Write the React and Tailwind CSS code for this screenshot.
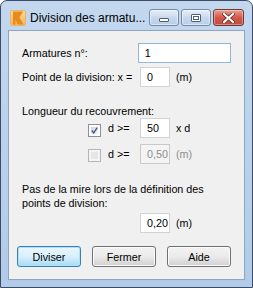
import { useState } from 'react';

const AppIcon = () => (
  <svg width="16" height="16" viewBox="0 0 16 16">
    <defs>
      <linearGradient id="ic" x1="0" y1="0" x2="0" y2="1">
        <stop offset="0" stopColor="#fbd89a" />
        <stop offset="1" stopColor="#f3b65a" />
      </linearGradient>
    </defs>
    <rect x="0.5" y="0.5" width="15" height="15" rx="1.5" fill="url(#ic)" stroke="#e9b46a" />
    <path d="M3 1.5 L13 1.5 L9.5 7.5 L13.5 14.5 L8 14.5 L5.5 10 L5.5 14.5 L3 14.5 Z" fill="#e98a1d" />
  </svg>
);

const CaptionButton = ({ kind }) => {
  if (kind === 'close') {
    return (
      <div className="w-[31px] h-[17px] rounded-[3px] border border-[#6b3a37] bg-gradient-to-b from-[#e8a093] via-[#d3574a] to-[#c24a3c] flex items-center justify-center shadow-[inset_0_0_0_1px_rgba(255,255,255,0.35)]">
        <svg width="13" height="10" viewBox="0 0 13 10">
          <path d="M2 1 L11 9 M11 1 L2 9" stroke="#5a2a26" strokeWidth="3.6" strokeLinecap="square" />
          <path d="M2 1 L11 9 M11 1 L2 9" stroke="#ffffff" strokeWidth="2.2" strokeLinecap="square" />
        </svg>
      </div>
    );
  }
  return (
    <div className="w-[30px] h-[17px] rounded-[3px] border border-[#7189ab] bg-gradient-to-b from-[#e7eff8] via-[#c9d9ec] to-[#b8cde6] flex items-center justify-center shadow-[inset_0_0_0_1px_rgba(255,255,255,0.5)]">
      {kind === 'min' ? (
        <div className="w-[10px] h-[4px] mt-[4px] bg-white border border-[#4e5f79] rounded-[1px]" />
      ) : (
        <div className="w-[10px] h-[8px] border border-[#4e5f79] bg-white flex items-center justify-center rounded-[1px]">
          <div className="w-[6px] h-[4px] border border-[#4e5f79]" />
        </div>
      )}
    </div>
  );
};

const TextBox = ({ value, width = 'w-[30px]', disabled, focused }) => (
  <div
    className={`${width} h-[20px] border flex items-center px-[6px] ${
      disabled
        ? 'bg-[#f4f4f4] border-[#c9c9c9] text-[#8d8d8d]'
        : focused
        ? 'bg-white border-[#8fb6dd] text-black'
        : 'bg-white border-[#d0d3d8] text-black'
    }`}
  >
    {value}
  </div>
);

const CheckBox = ({ checked, disabled }) => (
  <div
    className={`w-[13px] h-[13px] border p-[2px] ${
      disabled ? 'border-[#b5b5b5] bg-[#f4f4f4]' : 'border-[#8f8f8f] bg-white'
    }`}
  >
    <div
      className={`w-full h-full flex items-center justify-center ${
        disabled ? 'bg-[#e6e6e6]' : 'bg-gradient-to-br from-[#cfd2d6] to-[#f4f4f4]'
      }`}
    >
      {checked && (
        <svg width="9" height="9" viewBox="0 0 9 9">
          <path d="M1 4.5 L3.5 7.5 L8 0.8" fill="none" stroke="#3f5689" strokeWidth="1.8" />
        </svg>
      )}
    </div>
  </div>
);

const DialogButton = ({ label, primary }) => (
  <div
    className={`w-[65px] h-[21px] rounded-[3px] border flex items-center justify-center text-black ${
      primary
        ? 'border-[#3c7fb1] bg-gradient-to-b from-[#eaf6fd] via-[#d9f0fc] to-[#a7d9f5] shadow-[inset_0_0_0_1px_#a9e3fb]'
        : 'border-[#707070] bg-gradient-to-b from-[#f2f2f2] via-[#ebebeb] to-[#d0d0d0] shadow-[inset_0_0_0_1px_#fcfcfc]'
    }`}
  >
    {label}
  </div>
);

export default function App() {
  const [values] = useState({ bar: '1', x: '0', k: '50', len: '0,50', step: '0,20' });

  return (
    <div className="w-[253px] h-[288px] bg-white">
      <div className="w-[253px] h-[288px] flex flex-col rounded-t-[7px] border border-[#3b4d66] bg-gradient-to-b from-[#c3d8ef] to-[#b1cbe8] font-['Liberation_Sans',Arial,sans-serif]">
        {/* Title bar */}
        <div className="h-[29px] flex items-start pt-[8px] pl-[9px] pr-[8px] shrink-0">
          <div className="mt-[1px]">
            <AppIcon />
          </div>
          <span className="ml-[4px] mt-[1px] text-[12px] leading-[16px] text-black whitespace-nowrap">
            Division des armatu...
          </span>
          <div className="ml-auto flex gap-[2px]">
            <CaptionButton kind="min" />
            <CaptionButton kind="max" />
            <CaptionButton kind="close" />
          </div>
        </div>

        {/* Client area */}
        <div className="mx-[7px] h-[250px] bg-[#f0f0f0] border border-[#8ea5c2] px-[13px] text-[10.75px] leading-[14px] text-black">
          <div className="mt-[12px] flex items-center h-[20px]">
            <div className="w-[118px]">Armatures n°:</div>
            <TextBox value={values.bar} width="w-[95px]" focused />
          </div>

          <div className="mt-[4px] flex items-center h-[20px]">
            <div className="w-[118px] whitespace-nowrap">Point de la division: x =</div>
            <TextBox value={values.x} />
            <span className="ml-[6px]">(m)</span>
          </div>

          <div className="mt-[17px]">Longueur du recouvrement:</div>

          <div className="mt-[0px] flex items-center h-[20px] pl-[66px]">
            <div className="mt-[4px]">
              <CheckBox checked />
            </div>
            <span className="ml-[7px] w-[32px]">d &gt;=</span>
            <TextBox value={values.k} />
            <span className="ml-[6px]">x d</span>
          </div>

          <div className="mt-[6px] flex items-center h-[20px] pl-[66px]">
            <div className="mt-[3px]">
              <CheckBox disabled />
            </div>
            <span className="ml-[7px] w-[32px]">d &gt;=</span>
            <TextBox value={values.len} disabled />
            <span className="ml-[6px] text-[#8d8d8d]">(m)</span>
          </div>

          <div className="mt-[18px]">
            <div>Pas de la mire lors de la définition des</div>
            <div>points de division:</div>
          </div>

          <div className="mt-[3px] flex items-center h-[20px] pl-[118px]">
            <TextBox value={values.step} />
            <span className="ml-[6px]">(m)</span>
          </div>

          <div className="mt-[13px] flex gap-[11px] -ml-[5px]">
            <DialogButton label="Diviser" primary />
            <DialogButton label="Fermer" />
            <DialogButton label="Aide" />
          </div>
        </div>
      </div>
    </div>
  );
}
